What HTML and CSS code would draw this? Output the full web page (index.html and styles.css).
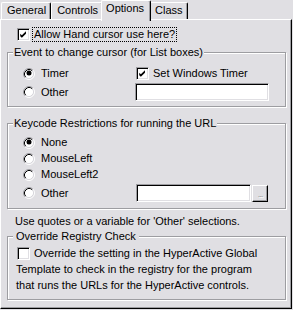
FILE: index.html
```html
<!DOCTYPE html>
<html lang="en">
<head>
  <meta charset="UTF-8">
  <title>Options</title>
  <link rel="stylesheet" href="styles.css">
</head>
<body>

  <svg class="defs" width="0" height="0">
    <symbol id="radio" viewBox="0 0 12 12">
      <circle cx="6" cy="6" r="4.5" fill="#fff"/>
      <path d="M2.11 9.89A5.5 5.5 0 0 1 9.89 2.11" fill="none" stroke="#9d9da1"/>
      <path d="M9.89 2.11A5.5 5.5 0 0 1 2.11 9.89" fill="none" stroke="#fff"/>
      <path d="M2.82 9.18A4.5 4.5 0 0 1 9.18 2.82" fill="none" stroke="#000"/>
      <path d="M9.18 2.82A4.5 4.5 0 0 1 2.82 9.18" fill="none" stroke="#d8d7dc"/>
    </symbol>
    <symbol id="tick" viewBox="0 0 11 11">
      <path d="M1.5 4.5 L3.5 6.5 L8.5 1.5 L8.5 4.5 L3.5 9.5 L1.5 7.5 Z" fill="#000"/>
    </symbol>
  </svg>

  <div class="tabs">
    <div class="tab">General</div>
    <div class="tab">Controls</div>
    <div class="tab active">Options</div>
    <div class="tab">Class</div>
  </div>

  <div class="panel">

    <div class="check-row top-check">
      <span class="check"><svg><use href="#tick"/></svg></span>
      <span class="focus">Allow Hand cursor use here?</span>
    </div>

    <fieldset class="group">
      <legend>Event to change cursor (for List boxes)</legend>
      <div class="group-body event-grid">
        <div class="radio-row">
          <svg class="radio"><use href="#radio"/></svg>
          <span class="dot on"></span>Timer
        </div>
        <div class="check-row timer-check">
          <span class="check"><svg><use href="#tick"/></svg></span>Set Windows Timer
        </div>
        <div class="radio-row">
          <svg class="radio"><use href="#radio"/></svg>Other
        </div>
        <div class="textbox event-box"></div>
      </div>
    </fieldset>

    <fieldset class="group keycode">
      <legend>Keycode Restrictions for running the URL</legend>
      <div class="group-body key-list">
        <div class="radio-row">
          <svg class="radio"><use href="#radio"/></svg>
          <span class="dot on"></span>None
        </div>
        <div class="radio-row">
          <svg class="radio"><use href="#radio"/></svg>MouseLeft
        </div>
        <div class="radio-row">
          <svg class="radio"><use href="#radio"/></svg>MouseLeft2
        </div>
        <div class="other-row">
          <div class="radio-row">
            <svg class="radio"><use href="#radio"/></svg>Other
          </div>
          <div class="textbox key-box"></div>
          <div class="browse">...</div>
        </div>
      </div>
    </fieldset>

    <p class="note">Use quotes or a variable for 'Other' selections.</p>

    <fieldset class="group override">
      <legend>Override Registry Check</legend>
      <p class="group-body override-text"><span class="check"></span>Override the setting in the HyperActive Global<br>Template to check in the registry for the program<br>that runs the URLs for the HyperActive controls.</p>
    </fieldset>

  </div>

</body>
</html>
```

FILE: styles.css
```css
/* Reset */
* {
  margin: 0;
  padding: 0;
  box-sizing: border-box;
}

body {
  width: 293px;
  height: 310px;
  overflow: hidden;
  background: #e0dfe3;
  color: #000;
  font-family: 'Liberation Sans', Arial, sans-serif;
  font-size: 11px;
  line-height: 13px;
}

.defs {
  position: absolute;
}

/* Tab strip */
.tabs {
  display: flex;
  align-items: flex-end;
  height: 19px;
  padding-left: 1px;
}

.tab {
  height: 17px;
  padding: 1px 4px 0 5px;
  border-top: 1px solid #fff;
  border-left: 1px solid #fff;
  border-right: 1px solid #000;
  border-radius: 2px 2px 0 0;
  box-shadow: inset -1px 0 0 #9d9da1;
  white-space: nowrap;
}

.tab.active {
  position: relative;
  z-index: 1;
  height: 21px;
  margin: 0 -2px -2px;
  padding: 1px 6px 0 4px;
  background: #e0dfe3;
}

/* Tab page */
.panel {
  width: 292px;
  height: 290px;
  padding: 0 5px 0 6px;
  border-top: 1px solid #fff;
  border-left: 1px solid #fff;
  border-right: 1px solid #000;
  border-bottom: 1px solid #000;
  box-shadow: inset -1px -1px 0 #9d9da1;
}

/* Checkboxes */
.check-row {
  display: flex;
  align-items: center;
  height: 13px;
}

.check {
  display: inline-block;
  width: 13px;
  height: 13px;
  padding: 1px;
  background: #fff;
  border: 1px solid;
  border-color: #9d9da1 #fff #fff #9d9da1;
  box-shadow: inset 1px 1px 0 #000, inset -1px -1px 0 #e0dfe3;
  margin-right: 4px;
  flex: none;
}

.check svg {
  display: block;
  width: 9px;
  height: 9px;
}

.top-check {
  margin: 8px 0 0 10px;
}

.focus {
  margin-left: -1px;
  padding: 0 1px;
  outline: 1px dotted #000;
}

/* Group boxes */
.group {
  min-width: 0;
  margin-top: 10px;
  padding: 0 0 0 5px;
  border: 1px solid #9d9da1;
  box-shadow: inset 1px 1px 0 #fff, 1px 1px 0 #fff;
}

.group legend {
  padding: 0 1px;
  background: #e0dfe3;
  line-height: 13px;
}

.top-check + .group {
  margin-top: 5px;
}

.group-body {
  padding-left: 10px;
}

/* Radio buttons */
.radio-row {
  display: flex;
  align-items: center;
  height: 13px;
  position: relative;
}

.radio {
  width: 12px;
  height: 12px;
  margin-right: 6px;
  flex: none;
}

.dot {
  display: none;
}

.dot.on {
  display: block;
  position: absolute;
  left: 4px;
  top: 4px;
  width: 4px;
  height: 4px;
  border-radius: 50%;
  background: #000;
  box-shadow: 0 0 0 0.5px #000;
}

/* Event group */
.event-grid {
  display: grid;
  grid-template-columns: 112px 1fr;
  row-gap: 3px;
  align-items: center;
  padding-top: 8px;
  padding-bottom: 5px;
}

.timer-check {
  margin-left: 1px;
}

.textbox {
  height: 18px;
  background: #fff;
  border: 1px solid;
  border-color: #9d9da1 #fff #fff #9d9da1;
  box-shadow: inset 1px 1px 0 #000, inset -1px -1px 0 #e0dfe3;
}

.event-box {
  width: 134px;
}

/* Keycode group */
.key-list {
  display: flex;
  flex-direction: column;
  gap: 3px;
  padding-top: 6px;
  padding-bottom: 6px;
}

.other-row {
  display: grid;
  grid-template-columns: 112px 115px 16px;
  column-gap: 1px;
  align-items: center;
}

.key-box {
  width: 115px;
}

.browse {
  height: 17px;
  margin-top: 1px;
  border: 1px solid;
  border-color: #fff #000 #000 #fff;
  box-shadow: inset -1px -1px 0 #9d9da1;
  color: #9d9da1;
  text-shadow: 1px 1px 0 #fff;
  font-size: 9px;
  line-height: 16px;
  text-align: center;
  letter-spacing: -1px;
}

.note {
  margin: 6px 0 0 8px;
}

/* Override group */
.override {
  margin-top: 2px;
}

.override legend {
  padding: 0 3px;
}

.override-text {
  padding: 2px 0 6px 3px;
  line-height: 16px;
  white-space: nowrap;
}

.override-text .check {
  vertical-align: -3px;
  margin-left: 1px;
}
```
